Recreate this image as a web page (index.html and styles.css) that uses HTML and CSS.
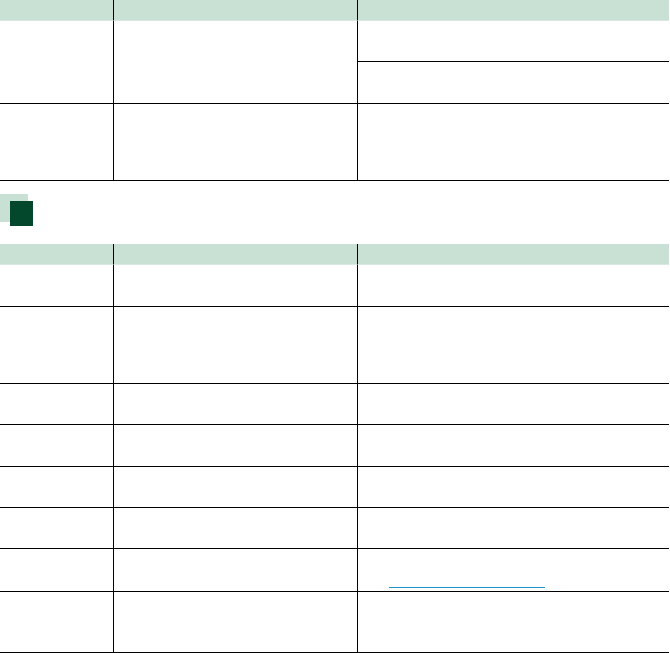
FILE: index.html
```html
<!DOCTYPE html>
<html lang="en">
<head>
<meta charset="utf-8">
<title>Table</title>
<link rel="stylesheet" href="styles.css">
</head>
<body>
<div class="page">
  <div class="grid grid-a">
    <div class="cell head line-r"></div>
    <div class="cell head line-r"></div>
    <div class="cell head"></div>

    <div class="cell line-r line-b span2"></div>
    <div class="cell line-r line-b span2"></div>
    <div class="cell line-b"></div>
    <div class="cell line-b"></div>

    <div class="cell line-r line-b"></div>
    <div class="cell line-r line-b"></div>
    <div class="cell line-b"></div>
  </div>

  <div class="section-mark">
    <span class="mark-back"></span>
    <span class="mark-front"></span>
  </div>

  <div class="grid grid-b">
    <div class="cell head line-r"></div>
    <div class="cell head line-r"></div>
    <div class="cell head"></div>

    <div class="cell line-r line-b"></div><div class="cell line-r line-b"></div><div class="cell line-b"></div>
    <div class="cell line-r line-b"></div><div class="cell line-r line-b"></div><div class="cell line-b"></div>
    <div class="cell line-r line-b"></div><div class="cell line-r line-b"></div><div class="cell line-b"></div>
    <div class="cell line-r line-b"></div><div class="cell line-r line-b"></div><div class="cell line-b"></div>
    <div class="cell line-r line-b"></div><div class="cell line-r line-b"></div><div class="cell line-b"></div>
    <div class="cell line-r line-b"></div><div class="cell line-r line-b"></div><div class="cell line-b"></div>
    <div class="cell line-r line-b"></div><div class="cell line-r line-b"></div><div class="cell line-b"><a class="link" href="#"></a></div>
    <div class="cell line-r line-b"></div><div class="cell line-r line-b"></div><div class="cell line-b"></div>
  </div>
</div>
</body>
</html>
```

FILE: styles.css
```css
* {
  box-sizing: border-box;
}

html, body {
  margin: 0;
  padding: 0;
  background: #ffffff;
  font-family: "Liberation Sans", Arial, sans-serif;
}

.page {
  width: 670px;
}

.grid {
  display: grid;
  grid-template-columns: 114px 244px 311px;
  width: 669px;
}

.grid-a {
  grid-template-rows: 21px 41px 42px 77px;
}

.grid-b {
  grid-template-rows: 21px 42px 77px 41px 42px 41px 41px 43px 61px;
}

.cell {
  min-width: 0;
}

.head {
  background: #c9e0d5;
  border-bottom: 1px solid #d9e9e1;
}

.line-r {
  border-right: 1px solid #000000;
}

.line-b {
  border-bottom: 1px solid #000000;
}

.span2 {
  grid-row: span 2;
}

.section-mark {
  position: relative;
  height: 63px;
  padding-top: 13px;
}

.mark-back {
  display: block;
  width: 28px;
  height: 28px;
  background: #c9e0d5;
}

.mark-front {
  position: absolute;
  left: 10px;
  top: 20px;
  width: 23px;
  height: 25px;
  background: #03482d;
}

.link {
  display: block;
  width: 156px;
  height: 1px;
  margin: 38px 0 0 31px;
  background: #1e96d2;
}
```
